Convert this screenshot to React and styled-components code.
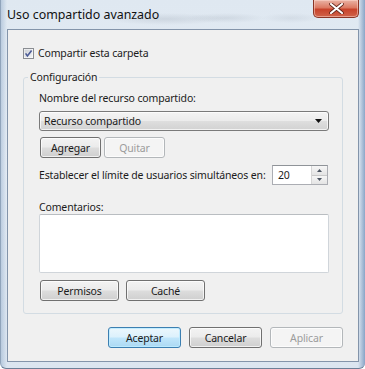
import styled, { createGlobalStyle } from "styled-components";

const GlobalStyle = createGlobalStyle`
  html, body {
    margin: 0;
    padding: 0;
    background: #ffffff;
  }
  body {
    font-family: "Noto Sans", "Liberation Sans", sans-serif;
    font-size: 10.5px;
    letter-spacing: -0.15px;
    color: #1b1b1b;
  }
`;

const Window = styled.div`
  width: 365px;
  height: 369px;
  box-sizing: border-box;
  display: flex;
  flex-direction: column;
  border-radius: 0 0 6px 6px;
  border-bottom: 1px solid #6c7f97;
  border-left: 1px solid #90a4bb;
  background:
    linear-gradient(90deg, rgba(140, 168, 200, 0.45) 0, rgba(255, 255, 255, 0) 6px,
      rgba(255, 255, 255, 0) calc(100% - 7px), rgba(80, 120, 170, 0.6) 100%),
    linear-gradient(180deg, #dfe8f1 0%, #e6edf5 45%, #dbe5f0 100%);
`;

const TitleBar = styled.div`
  height: 30px;
  display: flex;
  justify-content: space-between;
  align-items: flex-start;
  padding-left: 6px;
  background:
    radial-gradient(ellipse 60px 6px at 165px 19px, rgba(120, 130, 145, 0.18), transparent),
    radial-gradient(ellipse 40px 5px at 225px 18px, rgba(120, 130, 145, 0.16), transparent),
    radial-gradient(ellipse 30px 5px at 290px 18px, rgba(120, 130, 145, 0.12), transparent);
`;

const Title = styled.div`
  padding-top: 6px;
  font-size: 12.4px;
  letter-spacing: 0;
  line-height: 18px;
  color: #111;
`;

const CloseButton = styled.div`
  width: 46px;
  height: 18px;
  margin-right: 6px;
  box-sizing: border-box;
  border: 1px solid #8a3526;
  border-top: none;
  border-radius: 0 0 5px 5px;
  display: flex;
  align-items: center;
  justify-content: center;
  background: linear-gradient(180deg, #eab3a5 0%, #dc7a63 45%, #c8432b 55%, #d0634a 100%);
  box-shadow: inset 0 0 0 1px rgba(255, 220, 210, 0.5);
`;

const Client = styled.div`
  flex: 1;
  margin: 0 6px 6px 6px;
  border: 1px solid #8394aa;
  background: #f0f0f0;
  padding: 16px 15px 13px 15px;
  display: flex;
  flex-direction: column;
`;

const CheckRow = styled.label`
  display: flex;
  align-items: center;
  gap: 4px;
  height: 15px;
  line-height: 15px;
`;

const Group = styled.fieldset`
  margin: 9px 0 0 0;
  padding: 6px 13px 12px 15px;
  border: 1px solid #d3dce3;
  border-radius: 3px;
  display: flex;
  flex-direction: column;
  min-width: 0;
`;

const Legend = styled.legend`
  padding: 0 2px;
  margin-left: -11px;
  line-height: 15px;
`;

const Label = styled.div`
  line-height: ${(p) => p.$lh || 15}px;
  margin-top: ${(p) => p.$mt || 0}px;
  white-space: nowrap;
`;

const Combo = styled.div`
  margin-top: 5px;
  height: 20px;
  box-sizing: border-box;
  border: 1px solid #7a7a7a;
  border-radius: 3px;
  display: flex;
  align-items: center;
  justify-content: space-between;
  padding: 0 6px 0 4px;
  background: linear-gradient(180deg, #f4f4f4 0%, #ececec 48%, #dedede 52%, #d2d2d2 100%);
  box-shadow: inset 0 0 0 1px rgba(255, 255, 255, 0.7);
`;

const Row = styled.div`
  display: flex;
  align-items: center;
  gap: ${(p) => p.$gap || 3}px;
  margin-top: ${(p) => p.$mt || 0}px;
  padding-left: 1px;
`;

const Button = styled.div`
  width: ${(p) => p.$w || 61}px;
  height: 21px;
  box-sizing: border-box;
  border-radius: 3px;
  display: flex;
  align-items: center;
  justify-content: center;
  border: 1px solid ${(p) => (p.$default ? "#3c7fb1" : p.$disabled ? "#b3b7ba" : "#707070")};
  color: ${(p) => (p.$disabled ? "#9c9c9c" : "#1b1b1b")};
  background: ${(p) =>
    p.$disabled
      ? "#f4f4f4"
      : p.$default
      ? "linear-gradient(180deg, #ecf7fd 0%, #dcf1fc 48%, #c1e6fb 52%, #abd9f3 100%)"
      : "linear-gradient(180deg, #f3f3f3 0%, #ebebeb 48%, #dddddd 52%, #cfcfcf 100%)"};
  box-shadow: inset 0 0 0 1px
    ${(p) => (p.$default ? "rgba(190, 235, 255, 0.9)" : "rgba(255, 255, 255, 0.7)")};
`;

const LimitRow = styled.div`
  margin-top: 7px;
  display: flex;
  align-items: center;
  justify-content: space-between;
`;

const Spin = styled.div`
  width: 56px;
  height: 20px;
  margin-right: 1px;
  box-sizing: border-box;
  border: 1px solid #abadb3;
  border-top-color: #8f9398;
  background: #fff;
  display: flex;
  align-items: center;
  justify-content: space-between;
  padding-left: 5px;
`;

const SpinButtons = styled.div`
  width: 15px;
  height: 100%;
  display: flex;
  flex-direction: column;
  border-left: 1px solid #d6d6d6;
`;

const SpinPart = styled.div`
  flex: 1;
  display: flex;
  align-items: center;
  justify-content: center;
  background: linear-gradient(180deg, #f6f6f6, #e4e4e4);
  border-bottom: ${(p) => (p.$top ? "1px solid #c9c9c9" : "none")};
`;

const Comments = styled.div`
  height: 59px;
  box-sizing: border-box;
  border: 1px solid #d0d5da;
  border-top-color: #b9bdc1;
  border-radius: 2px;
  background: #fff;
`;

const Footer = styled.div`
  margin-top: 13px;
  display: flex;
  justify-content: flex-end;
  gap: 8px;
`;

const CheckBox = () => (
  <svg width="11" height="11" viewBox="0 0 11 11">
    <defs>
      <linearGradient id="cbg" x1="0" y1="0" x2="1" y2="1">
        <stop offset="0" stopColor="#cbcfd5" />
        <stop offset="1" stopColor="#f4f5f7" />
      </linearGradient>
    </defs>
    <rect x="0.5" y="0.5" width="10" height="10" fill="#fff" stroke="#8a8d92" />
    <rect x="1.5" y="1.5" width="8" height="8" fill="url(#cbg)" />
    <path d="M2.6 5.4 L4.4 8 L8.6 2.6" fill="none" stroke="#4a5a96" strokeWidth="1.6" />
  </svg>
);

const DownArrow = () => (
  <svg width="7" height="4" viewBox="0 0 7 4">
    <path d="M0 0 H7 L3.5 4 Z" fill="#111" />
  </svg>
);

const SmallArrow = ({ up }) => (
  <svg width="5" height="3" viewBox="0 0 5 3">
    <path d={up ? "M0 3 H5 L2.5 0 Z" : "M0 0 H5 L2.5 3 Z"} fill="#4c5562" />
  </svg>
);

const CloseX = () => (
  <svg width="15" height="11" viewBox="0 0 15 11">
    <path d="M2 1 L13 10 M13 1 L2 10" stroke="#5c2218" strokeWidth="3.6" strokeLinecap="round" />
    <path d="M2 1 L13 10 M13 1 L2 10" stroke="#ffffff" strokeWidth="2.1" strokeLinecap="round" />
  </svg>
);

const App = () => {
  return (
    <>
      <GlobalStyle />
      <Window>
        <TitleBar>
          <Title>Uso compartido avanzado</Title>
          <CloseButton>
            <CloseX />
          </CloseButton>
        </TitleBar>
        <Client>
          <CheckRow>
            <CheckBox />
            <span>Compartir esta carpeta</span>
          </CheckRow>
          <Group>
            <Legend>Configuración</Legend>
            <Label>Nombre del recurso compartido:</Label>
            <Combo>
              <span>Recurso compartido</span>
              <DownArrow />
            </Combo>
            <Row $mt={6}>
              <Button>Agregar</Button>
              <Button $disabled>Quitar</Button>
            </Row>
            <LimitRow>
              <Label>Establecer el límite de usuarios simultáneos en:</Label>
              <Spin>
                <span>20</span>
                <SpinButtons>
                  <SpinPart $top>
                    <SmallArrow up />
                  </SpinPart>
                  <SpinPart>
                    <SmallArrow />
                  </SpinPart>
                </SpinButtons>
              </Spin>
            </LimitRow>
            <Label $mt={16} $lh={13}>Comentarios:</Label>
            <Comments />
            <Row $mt={7} $gap={7}>
              <Button $w={79}>Permisos</Button>
              <Button $w={79}>Caché</Button>
            </Row>
          </Group>
          <Footer>
            <Button $w={73} $default>Aceptar</Button>
            <Button $w={73}>Cancelar</Button>
            <Button $w={73} $disabled>Aplicar</Button>
          </Footer>
        </Client>
      </Window>
    </>
  );
};

export default App;
